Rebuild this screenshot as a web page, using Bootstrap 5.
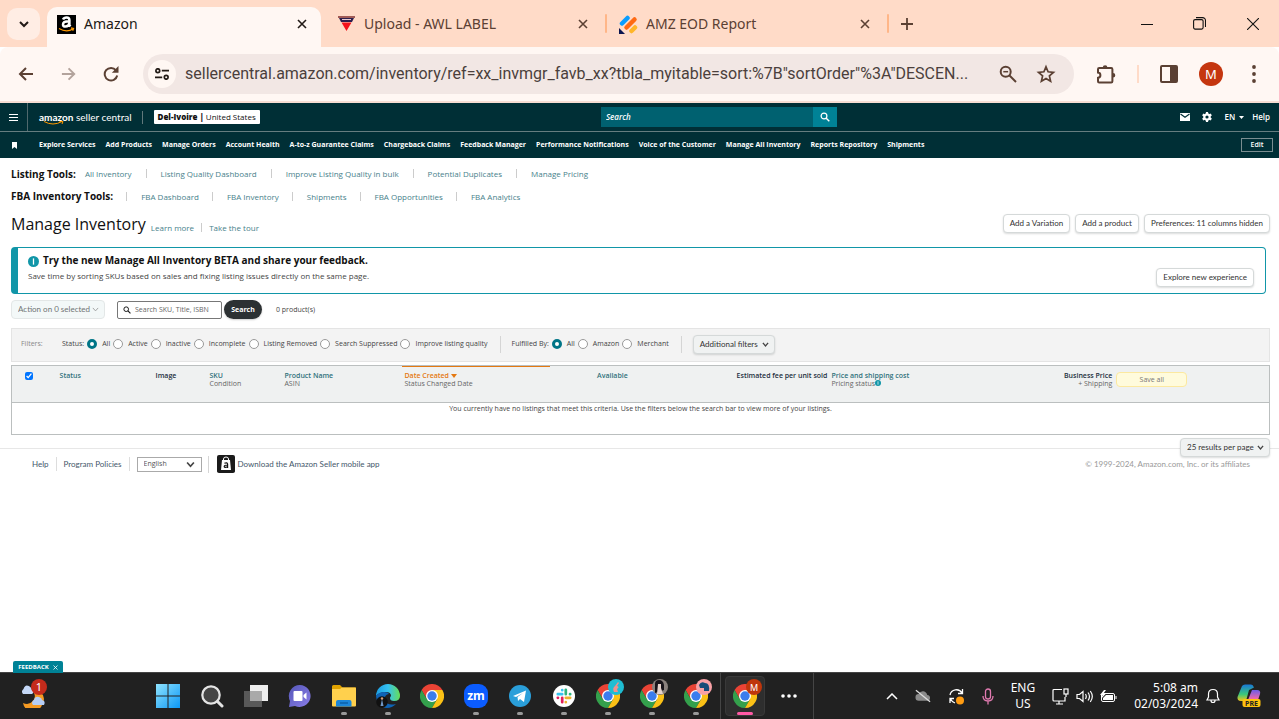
<!DOCTYPE html>
<html lang="en">
<head>
<meta charset="utf-8">
<meta name="viewport" content="width=device-width, initial-scale=1">
<title>Amazon</title>
<link href="https://cdn.jsdelivr.net/npm/bootstrap@5.3.0/dist/css/bootstrap.min.css" rel="stylesheet">
<style>
:root{--ember:"Open Sans","Noto Sans",sans-serif;--label:Lato,"Open Sans",sans-serif;--segoe:"Noto Sans","Open Sans",sans-serif;--teal:#008296;--ink:#002f36}
body{font-family:var(--ember);font-size:7px;line-height:8px;color:#444}
a{color:inherit;text-decoration:none}
button{font-family:inherit}
svg{display:block;flex:none}
.plain{border:0;background:none;padding:0;color:inherit;display:flex;align-items:center;justify-content:center}
/* browser frame */
.tabstrip{background:#ffdbc8;height:47px;font-family:var(--segoe);font-size:14px;line-height:20px;color:#5b4033;padding-left:7px}
.tabmenu{width:33px;height:32px;border-radius:10px;background:#ffede4;margin-top:8px}
.btab{width:280px;height:30px;margin-top:9px;padding:0 17px 0 12px}
.btab.current{width:274px;height:40px;margin:7px 0 0 7px;padding:0 14px 6px 10px;background:#fff7f3;color:#221a16;border-radius:10px 10px 0 0}
.tabsep{width:2px;height:19px;border-radius:1px;background:#ffb688;margin-top:14px}
.winbtn{width:53px;height:47px;color:#111}
.toolbar{background:#fff7f3;height:56px;border-bottom:2px solid #f7ddd3;color:#5b4033;border-radius:8px 8px 0 0}
.omnibox{background:#f2e7e4;border-radius:20px;height:40px;padding:0 18px 0 5px}
.siteinfo{width:28px;height:28px;border-radius:50%;background:#fff7f3}
.omnibox input{font-family:Roboto,"Open Sans",sans-serif;font-size:16px;line-height:24px;color:#4b3f3c;border:0;background:none;padding:0;outline:0;min-width:0;margin:0 6px 0 9px;text-overflow:ellipsis}
.omniicons{gap:19px}
.toolicons{gap:21px;padding:0 23px 0 22px}
.toolsep{width:2px;height:18px;background:#ffdbc8}
.avatar{width:24px;height:24px;border-radius:50%;background:#c5360f;color:#fff;font:13px/24px var(--segoe);text-align:center}
/* seller central header */
.schead{background:var(--ink);color:#fff;font-weight:700;font-size:7px}
.scbar{height:29px;border-bottom:1px solid #657d80}
.scleft{flex:30 1 0}
.scright{flex:23 1 0;font-size:8px;font-weight:600;padding-right:9px}
.burger{width:28px;border-right:1px solid #50696d}
.brand{font-family:var(--label);font-size:10px;line-height:14px;font-weight:400;margin-left:3px}
.brand svg{left:5px;top:11px}
.brandline{width:1px;height:13px;background:#61787b;margin:0 11px 0 10px}
.store{background:#fff;color:#111;height:14px;padding:0 4px;line-height:14px;font-size:8px;border-radius:1px}
.scsearch{width:236px;height:20px;background:#006170}
.scsearch input{background:none;border:0;color:#fff;font:italic 600 8px/10px var(--ember);padding:0 5px;outline:0;min-width:0}
.scsearch input::placeholder,.skubox input::placeholder{color:inherit;opacity:1}
.scsearch button{width:24px;background:var(--teal)}
.favs{height:26px;padding:0 6px 0 8px}
.favs>svg{margin-right:19px}
.favlinks{gap:10px}
.editbtn{border:1px solid #7a8d90;width:32px;height:14px;font-size:7px;font-weight:600;color:#fff}
/* page body */
.content{margin:4px 1px 0 3px}
.toolrow{height:23px;color:#48818b;font-size:8px}
.toolrow h2{font-size:10px;line-height:14px;font-weight:700;color:#111;margin:0}
.toolrow a{padding:0 14px;line-height:9px}
.toolrow a+a{border-left:1px solid #ccc}
.listing a:first-of-type{padding-left:9px}
.fba h2{border-right:1px solid #ccc;line-height:9px;padding-right:13px}
.fba a{padding:0 13px 0 14px}
.titlerow{height:31px;gap:5px}
.learn.toolrow{height:16px}
.learn a:first-child{padding:0 7px 0 0}
.learn a:last-child{padding:0 7px}
.headline{font-size:16px;line-height:22px;font-weight:400;color:#111}
.abtn{font-size:8px;line-height:9px;color:#333;background:#fff;border:1px solid #d5d9d9;border-radius:4px;height:19px;padding:0 6px;box-shadow:0 1px 2px rgba(15,17,17,.15);font-family:var(--label)}
.betabox{border:1px solid #1196a8;border-left-width:7px;border-radius:4px;height:47px;margin:8px 4px 0 0;padding:4px 11px 6px 10px}
.betabox h3{font-size:10px;line-height:14px;font-weight:700;color:#111}
.betabox p{font-size:8px;line-height:10px;margin:4px 0 0}
.chev{appearance:none;background-repeat:no-repeat;background-position:right 5px center;background-size:7px 7px;background-image:url("data:image/svg+xml,%3Csvg xmlns='http://www.w3.org/2000/svg' viewBox='0 0 8 8'%3E%3Cpath d='M1 2.2 4 5.6 7 2.2' fill='none' stroke='%23444' stroke-width='1.5'/%3E%3C/svg%3E")}
.actions{height:31px}
.actionsel{width:94px;color:#6f7373;opacity:.8;background-color:#f3f8f8;border-color:#e3e7e7;box-shadow:none;background-image:url("data:image/svg+xml,%3Csvg xmlns='http://www.w3.org/2000/svg' viewBox='0 0 8 8'%3E%3Cpath d='M1 2.2 4 5.6 7 2.2' fill='none' stroke='%23999' stroke-width='1'/%3E%3C/svg%3E")}
.skubox{width:105px;height:18px;margin:0 2px 0 12px;border:1px solid #777;border-radius:2px;padding-left:5px;color:#555}
.skubox input{border:0;padding:0;font:7px/10px var(--ember);color:#666;min-width:0;outline:0}
.darkbtn{background:#2c3133;color:#fff;border-radius:10px;width:38px;height:19px;font-weight:700;font-size:7px;box-shadow:0 1px 2px rgba(0,0,0,.2)}
.count{margin-left:14px}
.filters{background:#f3f3f3;border:1px solid #e4e4e4;height:34px;margin-top:3px;padding:0 0 2px 9px}
.filters .form-check-input{width:10px;height:10px;margin:0 5px 0 3px;border:1px solid #999;background:#fff}
.filters .form-check-input:checked{border:3px solid #007587;background:#fff}
.vline{width:1px;height:17px;background:#d5d5d5}
.flabel{width:41px;color:#888}
.fsep{margin:0 11px 0 12px}
.addf{width:82px;text-align:left;background-color:#f0f2f2}
.inv{table-layout:fixed;border:1px solid #bbbfbf;margin:3px 0 0;width:100%;border-collapse:collapse}
.inv th{background:#eff1f1;height:37px;padding:6px 2px;vertical-align:top;font-weight:400;color:#666;border-bottom:1px solid #bbbfbf}
.inv th b{font-weight:600;display:block;color:#31717c}
.inv th .dk{color:#232f3e}
.inv th.sorted{box-shadow:inset 0 1px #e47911}
.inv th.sorted b{color:#e47911}
.inv td{height:32px;padding:2px;text-align:center;vertical-align:top;color:#444}
.inv input{width:8px;height:8px;margin:0 0 0 11px;display:block;accent-color:#0075ff}
.savebtn{background:#fffbdc;border:1px solid #fce9a0;border-radius:4px;width:71px;height:15px;font-size:7px;color:#777}
.pager{margin-top:3px;position:relative}
.perpage{background-color:#f0f2f2;width:90px;color:#333}
.foot{border-top:1px solid #e7e7e7;padding:6px 29px 0 25px;margin-top:-9px;color:#44576a;font:8px/9px var(--label)}
.foot .item{height:14px;padding:0 7px;border-right:1px solid #ddd}
.foot .copy{color:#999}
.foot .app{margin-left:3px}
.langsel{width:65px;height:15px;margin:0 6px 0 7px;border:1px solid #aaa;background-color:#fff;font:7px/8px var(--ember);color:#555;padding:0 6px;background-size:11px 9px}
.feedback{position:absolute;left:13px;bottom:100%;background:var(--teal);color:#fff;font-size:6px;line-height:12px;font-weight:700;font-family:var(--ember);border-radius:2px 2px 0 0;width:50px;height:12px}
/* desktop bar */
.taskbar{background:#212121;border-top:1px solid #444;height:47px;color:#fff;font-family:var(--segoe)}
.weather{width:66px}
.apps{margin-left:80px}
.task{width:44px;height:46px;position:relative}
.task.run::after{content:"";position:absolute;bottom:4px;left:50%;margin-left:-3px;width:6px;height:3px;border-radius:2px;background:#999}
.task.front{width:40px;height:40px;background:#2e2e2e;border:1px solid #393939;border-radius:4px;margin:0 2px 0 4px}
.task.front::after{background:#ff5aa5;width:16px;margin-left:-8px;bottom:0}
.task .pin{position:absolute;left:22px;top:6px}
.task.front .pin{left:20px;top:2px}
.bar-sep{width:1px;height:46px;background:#454545}
.task+.bar-sep{margin-left:2px}
.tray{gap:17px;padding-right:18px}
.quick{gap:7px}
.clock{font-size:12px;line-height:16px}
.bubble{position:absolute;left:31px;top:6px;width:16px;height:16px;border-radius:50%;background:#c42b1c;font-size:11px;line-height:16px;text-align:center}
</style>
</head>
<body class="d-flex flex-column min-vh-100 bg-white">
<svg width="0" height="0" class="position-absolute" aria-hidden="true">
<defs>
<symbol id="x" viewBox="0 0 10 10"><path d="M1 1l8 8M9 1L1 9" stroke="currentColor" stroke-width="1.6"/></symbol>
<symbol id="mag" viewBox="0 0 10 10"><circle cx="4" cy="4" r="2.9" fill="none" stroke="currentColor" stroke-width="1.2"/><path d="M6.2 6.2 9.3 9.3" stroke="currentColor" stroke-width="1.4"/></symbol>
<symbol id="info" viewBox="0 0 12 12"><circle cx="6" cy="6" r="6" fill="#1196a8"/><path d="M6 2.6v6.8" stroke="#fff" stroke-width="1.4"/></symbol>
<symbol id="chrome" viewBox="0 0 24 24"><path d="M1.6 6A12 12 0 0 1 22.4 6H12L6.8 15z" fill="#ea4335"/><path d="M1.6 6A12 12 0 0 0 12 24l5.2-9H6.8z" fill="#34a04c"/><path d="M12 24A12 12 0 0 0 22.4 6H12l5.2 9z" fill="#fbc116"/><circle cx="12" cy="12" r="6" fill="#fff"/><circle cx="12" cy="12" r="4.7" fill="#3b7ded"/></symbol>
</defs>
</svg>

<div class="tabstrip d-flex">
  <button class="plain tabmenu" aria-label="Search tabs"><svg width="10" height="7" viewBox="0 0 10 7"><path d="M1 1l4 4 4-4" fill="none" stroke="#221a16" stroke-width="2"/></svg></button>
  <div class="btab current d-flex align-items-center">
    <svg width="19" height="19" viewBox="0 0 19 19"><path d="M0 0h19v19H0z"/><path d="M6 4.500Q7 2.400 9.600 2.400 12.400 2.400 12.400 5v5.300l1 1.300M12 6.200Q6 6.200 6 9.400q0 2.100 2.400 2.100 3.600 0 4-3.600" fill="none" stroke="#fff" stroke-width="2.5"/><path d="M2 13.500q7.500 4.500 14 .5M14 13l2.500.4-.8 2.300" fill="none" stroke="#f90" stroke-width="1.3"/></svg>
    <span class="ms-2 me-auto">Amazon</span>
    <button class="plain" aria-label="Close tab"><svg width="10" height="10"><use href="#x"/></svg></button>
  </div>
  <div class="btab d-flex align-items-center ms-1">
    <svg width="19" height="18" viewBox="0 0 19 18"><path d="M1 1h17l-3 6H4z" fill="#2d1f4d"/><path d="M1 2h17" stroke="#a05a55" stroke-width="2"/><path d="M5 4.500h9" stroke="#e7c9cf" stroke-width="1"/><path d="M4.500 7.500h10L9.500 16z" fill="#f5121c"/></svg>
    <span class="ms-2 me-auto">Upload - AWL LABEL</span>
    <button class="plain" aria-label="Close tab"><svg width="10" height="10"><use href="#x"/></svg></button>
  </div>
  <div class="tabsep"></div>
  <div class="btab d-flex align-items-center">
    <svg width="19" height="19" viewBox="0 0 19 19"><path d="M3 8.500 8.500 3" stroke="#0a9dff" stroke-width="4.5" stroke-linecap="round"/><path d="M7.500 12.500 15.500 4.500" stroke="#ff6a13" stroke-width="4.5" stroke-linecap="round"/><path d="M12.500 16 16 12.500" stroke="#ffb629" stroke-width="4.5" stroke-linecap="round"/><path d="M0 13l6 6H0z" fill="#0a1551"/></svg>
    <span class="ms-2 me-auto">AMZ EOD Report</span>
    <button class="plain" aria-label="Close tab"><svg width="10" height="10"><use href="#x"/></svg></button>
  </div>
  <div class="tabsep"></div>
  <button class="plain ms-2 ps-1" aria-label="New tab"><svg width="12" height="12" viewBox="0 0 12 12"><path d="M6 0v12M0 6h12" stroke="#5b4033" stroke-width="1.8"/></svg></button>
  <div class="d-flex ms-auto">
    <button class="plain winbtn" aria-label="Minimize"><svg width="12" height="12" viewBox="0 0 12 12"><path d="M0 6.500h12" stroke="#111"/></svg></button>
    <button class="plain winbtn" aria-label="Restore"><svg width="13" height="13" viewBox="0 0 13 13" fill="none" stroke="#111" stroke-width="1.1"><rect x=".6" y="2.6" width="9.5" height="9.5" rx="1.5"/><path d="M3 .6h6.500a3 3 0 0 1 3 3V10"/></svg></button>
    <button class="plain winbtn" aria-label="Close"><svg width="12" height="12" viewBox="0 0 12 12"><path d="M0 0l12 12M12 0 0 12" stroke="#111" stroke-width="1.1"/></svg></button>
  </div>
</div>

<div class="toolbar d-flex align-items-center">
  <button class="plain ms-3 me-4" aria-label="Back"><svg width="20" height="16" viewBox="0 0 20 16"><path d="M17 8H4M10 2 4 8l6 6" fill="none" stroke="#5b4033" stroke-width="2"/></svg></button>
  <button class="plain me-4" aria-label="Forward"><svg width="19" height="16" viewBox="0 0 20 16"><path d="M2 8h13M9 2l6 6-6 6" fill="none" stroke="#b3a39c" stroke-width="2"/></svg></button>
  <button class="plain me-4" aria-label="Reload"><svg width="16" height="16" viewBox="0 0 16 16"><path d="M13 4.300A6.300 6.300 0 1 0 14.200 9.500" fill="none" stroke="#5b4033" stroke-width="2"/><path d="M15.500 0v6.800H8.800z" fill="#5b4033"/></svg></button>
  <div class="omnibox d-flex align-items-center flex-grow-1">
    <button class="plain siteinfo" aria-label="Site information"><svg width="14" height="12" viewBox="0 0 14 12" fill="none" stroke="#221a16" stroke-width="1.7"><circle cx="2.800" cy="2.700" r="1.9"/><path d="M6.800 2.700H14M0 9.300h7.200"/><circle cx="11.200" cy="9.300" r="1.9"/></svg></button>
    <input class="flex-grow-1" aria-label="Address" value="sellercentral.amazon.com/inventory/ref=xx_invmgr_favb_xx?tbla_myitable=sort:%7B&quot;sortOrder&quot;%3A&quot;DESCEN...">
    <div class="d-flex align-items-center omniicons">
    <button class="plain" aria-label="Zoom"><svg width="18" height="18" viewBox="0 0 18 18" fill="none" stroke="#5b4033" stroke-width="2"><circle cx="6.700" cy="6.700" r="5"/><path d="M10.500 10.500 17 17"/><path d="M4.300 6.700h4.800" stroke-width="1.5"/></svg></button>
    <button class="plain" aria-label="Bookmark"><svg width="20" height="20" viewBox="0 0 20 20"><path d="M10 2.800l2.100 5 5.400.5-4.100 3.600 1.200 5.300L10 14.400l-4.600 2.800 1.200-5.300-4.100-3.600 5.400-.5z" fill="none" stroke="#5b4033" stroke-width="1.7"/></svg></button>
    </div>
  </div>
  <div class="d-flex align-items-center toolicons">
    <button class="plain" aria-label="Extensions"><svg width="20" height="20" viewBox="0 0 20 20"><path d="M2 5.200q0-1.200 1.200-1.200h12q1.200 0 1.200 1.200v12q0 1.200-1.200 1.200h-12q-1.200 0-1.200-1.200v-3.400q2.400-.3 2.400-2.600T2 8.600z" fill="none" stroke="#5b4033" stroke-width="2"/><path d="M6.800 3.500a2.300 2.300 0 0 1 4.600 0zM17 9a2.300 2.300 0 0 1 0 4.600z" fill="#5b4033"/></svg></button>
    <div class="toolsep"></div>
    <button class="plain" aria-label="Side panel"><svg width="18" height="18" viewBox="0 0 18 18"><rect x="1" y="1" width="16" height="16" rx="1" fill="none" stroke="#5b4033" stroke-width="2"/><path d="M10 1h7v16h-7z" fill="#5b4033"/></svg></button>
    <button class="plain avatar" aria-label="Profile">M</button>
    <button class="plain ps-2" aria-label="Menu"><svg width="4" height="18" viewBox="0 0 4 18" fill="#5b4033"><circle cx="2" cy="2" r="1.9"/><circle cx="2" cy="9" r="1.9"/><circle cx="2" cy="16" r="1.9"/></svg></button>
  </div>
</div>

<header class="schead">
  <div class="scbar d-flex">
    <button class="plain burger" aria-label="Menu"><svg width="9" height="7" viewBox="0 0 9 7"><path d="M0 .5h9M0 3.500h9M0 6.500h9" stroke="#fff"/></svg></button>
    <div class="scleft d-flex align-items-center ps-2">
      <a href="#" class="brand position-relative"><b>amazon</b> seller central
        <svg class="position-absolute" width="20" height="5" viewBox="0 0 20 5"><path d="M0 .5q9 5 18 0M15.500.5H19L18 3" fill="none" stroke="#f90" stroke-width="1"/></svg></a>
      <div class="brandline"></div>
      <a href="#" class="store"><b>Del-Ivoire |</b> <span class="fw-normal">United States</span></a>
    </div>
    <form class="scsearch d-flex align-self-center"><input class="flex-grow-1" type="search" aria-label="Search" placeholder="Search"><button class="plain" type="button" aria-label="Search"><svg width="10" height="10"><use href="#mag"/></svg></button></form>
    <div class="scright d-flex align-items-center justify-content-end gap-2">
      <a href="#" aria-label="Messages"><svg width="10" height="8" viewBox="0 0 10 8"><path d="M0 0h10v8H0z" fill="#fff"/><path d="M.5 1 5 4.300 9.500 1" fill="none" stroke="#002f36" stroke-width="1.1"/></svg></a>
      <a href="#" aria-label="Settings" class="mx-1"><svg width="10" height="10" viewBox="0 0 10 10"><circle cx="5" cy="5" r="2.7" fill="none" stroke="#fff" stroke-width="2.2"/><path d="M5 0v2M5 8v2M.7 2.500l1.700 1M7.600 6.500l1.700 1M.7 7.500l1.700-1M7.600 3.500l1.700-1" stroke="#fff" stroke-width="2.2"/></svg></a>
      <button class="plain fw-semibold">EN<svg class="ms-1" width="5" height="3" viewBox="0 0 5 3"><path d="M0 0h5L2.500 3z" fill="#fff"/></svg></button>
      <a href="#">Help</a>
    </div>
  </div>
  <nav class="favs d-flex align-items-center">
    <svg width="12" height="7" viewBox="0 0 12 7"><path d="M4 0h5v7L6.500 5 4 7z" fill="#fff"/></svg>
    <div class="d-flex favlinks me-auto">
      <a href="#">Explore Services</a><a href="#">Add Products</a><a href="#">Manage Orders</a><a href="#">Account Health</a><a href="#">A-to-z Guarantee Claims</a><a href="#">Chargeback Claims</a><a href="#">Feedback Manager</a><a href="#">Performance Notifications</a><a href="#">Voice of the Customer</a><a href="#">Manage All Inventory</a><a href="#">Reports Repository</a><a href="#">Shipments</a>
    </div>
    <button class="plain editbtn">Edit</button>
  </nav>
</header>

<main class="ps-2 pe-2">
 <div class="content">
  <div class="toolrow d-flex align-items-center listing"><h2>Listing Tools:</h2><a href="#">All Inventory</a><a href="#">Listing Quality Dashboard</a><a href="#">Improve Listing Quality in bulk</a><a href="#">Potential Duplicates</a><a href="#">Manage Pricing</a></div>
  <div class="toolrow d-flex align-items-center fba"><h2>FBA Inventory Tools:</h2><a href="#">FBA Dashboard</a><a href="#">FBA Inventory</a><a href="#">Shipments</a><a href="#">FBA Opportunities</a><a href="#">FBA Analytics</a></div>
  <div class="titlerow d-flex align-items-center">
    <h1 class="headline m-0">Manage Inventory</h1>
    <div class="toolrow d-flex align-items-end me-auto learn"><a href="#">Learn more</a><a href="#">Take the tour</a></div>
    <button class="abtn">Add a Variation</button><button class="abtn">Add a product</button><button class="abtn">Preferences: 11 columns hidden</button>
  </div>
  <section class="betabox d-flex justify-content-between">
    <div><div class="d-flex align-items-center"><svg class="mt-1 me-1" width="11" height="11"><use href="#info"/></svg><h3 class="m-0">Try the new Manage All Inventory BETA and share your feedback.</h3></div>
    <p>Save time by sorting SKUs based on sales and fixing listing issues directly on the same page.</p></div>
    <button class="abtn align-self-end">Explore new experience</button>
  </section>
  <div class="actions d-flex align-items-center">
    <select class="abtn chev actionsel" aria-label="Action on selected" disabled><option>Action on 0 selected</option></select>
    <div class="skubox d-flex align-items-center"><svg class="me-1" width="8" height="8" color="#111"><use href="#mag"/></svg><input class="flex-grow-1" type="text" aria-label="Search SKU, Title, ISBN" placeholder="Search SKU, Title, ISBN"></div>
    <button class="plain darkbtn">Search</button>
    <span class="count">0 product(s)</span>
  </div>
  <form class="filters d-flex align-items-center">
    <span class="flabel">Filters:</span><span>Status:</span>
    <input class="form-check-input" type="radio" name="st" id="s1" checked><label for="s1">All</label>
    <input class="form-check-input" type="radio" name="st" id="s2"><label for="s2">Active</label>
    <input class="form-check-input" type="radio" name="st" id="s3"><label for="s3">Inactive</label>
    <input class="form-check-input" type="radio" name="st" id="s4"><label for="s4">Incomplete</label>
    <input class="form-check-input" type="radio" name="st" id="s5"><label for="s5">Listing Removed</label>
    <input class="form-check-input" type="radio" name="st" id="s6"><label for="s6">Search Suppressed</label>
    <input class="form-check-input" type="radio" name="st" id="s7"><label for="s7">Improve listing quality</label>
    <div class="vline fsep"></div>
    <span>Fulfilled By:</span>
    <input class="form-check-input" type="radio" name="fb" id="f1" checked><label for="f1">All</label>
    <input class="form-check-input" type="radio" name="fb" id="f2"><label for="f2">Amazon</label>
    <input class="form-check-input" type="radio" name="fb" id="f3"><label for="f3">Merchant</label>
    <div class="vline fsep"></div>
    <button type="button" class="abtn chev addf">Additional filters</button>
  </form>
  <table class="inv">
    <colgroup><col style="width:3.66%"><col style="width:7.63%"><col style="width:4.29%"><col style="width:5.96%"><col style="width:9.54%"><col style="width:11.76%"><col style="width:9.86%"><col style="width:12.32%"><col style="width:13.59%"><col style="width:9.06%"><col></colgroup>
    <thead><tr>
      <th><input type="checkbox" aria-label="Select all" checked></th>
      <th><b>Status</b></th><th><b class="dk">Image</b></th><th><b>SKU</b>Condition</th><th><b>Product Name</b>ASIN</th>
      <th class="sorted"><b>Date Created <svg class="d-inline-block" width="6" height="4" viewBox="0 0 6 4"><path d="M0 0h6L3 4z" fill="#e47911"/></svg></b>Status Changed Date</th>
      <th class="text-center"><b>Available</b></th><th class="text-end"><b class="dk">Estimated fee per unit sold</b></th>
      <th><b>Price and shipping cost</b><span class="d-flex">Pricing status<svg width="6" height="6"><use href="#info"/></svg></span></th>
      <th class="text-end"><b class="dk">Business Price</b>+ Shipping</th><th><button class="savebtn plain">Save all</button></th>
    </tr></thead>
    <tbody><tr><td colspan="11">You currently have no listings that meet this criteria. Use the filters below the search bar to view more of your listings.</td></tr></tbody>
  </table>
  <div class="d-flex justify-content-end pager"><select class="abtn chev perpage" aria-label="Results per page"><option>25 results per page</option></select></div>
 </div>
</main>
<footer class="foot d-flex align-items-center">
  <a href="#" class="item d-flex align-items-center">Help</a><a href="#" class="item d-flex align-items-center">Program Policies</a>
  <select class="chev langsel" aria-label="Language"><option>English</option></select>
  <div class="vline"></div>
  <svg class="ms-2" width="18" height="18" viewBox="0 0 18 18"><rect width="18" height="18" rx="2" fill="#1b1b1b"/><path d="M5 5h8l1 10H4z" fill="#fff"/><path d="M6.500 6V4q0-2 2.500-2t2.500 2v2" fill="none" stroke="#fff"/><path d="M7.400 8.300q2.800-1.300 3.200.7v4M10.500 10q-3.300 0-3.300 1.500t3.300.4" fill="none" stroke="#111" stroke-width="1.2"/></svg>
  <a href="#" class="me-auto app">Download the Amazon Seller mobile app</a>
  <span class="copy">© 1999-2024, Amazon.com, Inc. or its affiliates</span>
</footer>

<div class="taskbar d-flex align-items-center mt-auto position-relative">
  <button class="plain feedback gap-1">FEEDBACK <svg width="5" height="5"><use href="#x"/></svg></button>
  <button class="plain weather" aria-label="Weather"><svg width="26" height="24" viewBox="0 0 26 24"><path d="M13 7a8 8 0 0 1-10 12 10 10 0 0 0 19 2A9 9 0 0 0 20 8z" fill="#f59a23"/><path d="M3 10a3.500 3.500 0 0 1 .5-5Q5 0 9 2q3 2 3 4 3 2 0 4z" fill="#c5d8f7"/><path d="M13 21a3 3 0 0 1 1-5q1-4 5-3 3 1 3 3 4 1 2 5z" fill="#b5cdf4"/></svg></button>
  <span class="bubble">1</span>
  <div class="d-flex align-items-center apps">
    <button class="plain task" aria-label="Start"><svg width="24" height="24" viewBox="0 0 24 24"><defs><linearGradient id="w" x2="1" y2="1"><stop stop-color="#8fe4ff"/><stop offset="1" stop-color="#0c97f5"/></linearGradient></defs><path d="M0 0h11.500v11.500H0zM12.500 0H24v11.500H12.500zM0 12.500h11.500V24H0zM12.500 12.500H24V24H12.500z" fill="url(#w)"/></svg></button>
    <button class="plain task" aria-label="Search"><svg width="24" height="24" viewBox="0 0 24 24"><circle cx="11" cy="11" r="8.7" fill="#454545" stroke="#e4e4e4" stroke-width="2.2"/><path d="M17.500 17.500 22 22" stroke="#e4e4e4" stroke-width="3" stroke-linecap="round"/></svg></button>
    <button class="plain task" aria-label="Task view"><svg width="24" height="22" viewBox="0 0 24 22"><path d="M6 0h18v16H6z" fill="#eee"/><path d="M0 6h18v16H0z" fill="#595959"/><path d="M6 6h12v10H6z" fill="#a9a9a9"/></svg></button>
    <button class="plain task" aria-label="Chat"><svg width="24" height="24" viewBox="0 0 24 24"><defs><linearGradient id="t" x2="1" y2="1"><stop stop-color="#5557b8"/><stop offset="1" stop-color="#8a7de8"/></linearGradient></defs><path d="M12 1a11 11 0 1 1-5 21L1 23l1-6A11 11 0 0 1 12 1z" fill="url(#t)"/><rect x="5.500" y="7" width="9" height="10" rx="1" fill="#fff"/><path d="M15.500 11l3-2.500v7l-3-2.500z" fill="#fff"/></svg></button>
    <button class="plain task run" aria-label="File Explorer"><svg width="24" height="22" viewBox="0 0 24 22"><path d="M0 1.500Q0 0 1.500 0H8l2.500 2.500H24V8H0z" fill="#e0a200"/><path d="M0 4h8l2-1.500h13q1 0 1 1V20.500q0 1-1 1H1q-1 0-1-1z" fill="#ffd04d"/><path d="M4 21.500V17q0-2 2-2h11.500q2 0 2 2v4.500z" fill="#1b86d9"/><path d="M8 18h8" stroke="#0c61a8" stroke-width="1.5"/></svg></button>
    <button class="plain task run" aria-label="Edge"><svg width="24" height="24" viewBox="0 0 24 24"><defs><linearGradient id="e" x2="1"><stop stop-color="#1b9de2"/><stop offset=".5" stop-color="#35c1f1"/><stop offset="1" stop-color="#66de55"/></linearGradient></defs><path d="M0 12A12 12 0 0 1 24 12q0 5-6 5-4 0-4-3 0-1 1-2 0-4-5-4-7 0-10 4z" fill="url(#e)"/><path d="M0 12Q3 8 8 8q4 0 5 2-5 1-4 6 2 6 11 4-4 4-9 4A12 12 0 0 1 0 12z" fill="#0f63b5"/><circle cx="6" cy="18" r="5.8" fill="#111"/><path d="M6 15l1.500 7h-3z" fill="#7198c6"/><circle cx="6" cy="14.500" r="1.2" fill="#d9a07b"/></svg></button>
    <button class="plain task" aria-label="Chrome"><svg width="24" height="24"><use href="#chrome"/></svg></button>
    <button class="plain task run" aria-label="Zoom"><svg width="24" height="24" viewBox="0 0 24 24"><rect width="24" height="24" rx="9" fill="#0b5cff"/><text x="12" y="16" font-size="12" font-weight="700" text-anchor="middle" fill="#fff">zm</text></svg></button>
    <button class="plain task run" aria-label="Telegram"><svg width="22" height="22" viewBox="0 0 22 22"><circle cx="11" cy="11" r="11" fill="#2a9fda"/><path d="M4 11 17 5.500 15 17l-4-3-2 2-.5-4L14 8l-7 4z" fill="#fff"/></svg></button>
    <button class="plain task run" aria-label="Slack"><svg width="22" height="22" viewBox="0 0 22 22"><circle cx="11" cy="11" r="11" fill="#fff"/><g stroke-width="2.7" stroke-linecap="round"><path d="M9.200 5v.2M4.800 9.200h4.400" stroke="#36c5f0"/><path d="M12.800 4.800v4.400M17 9.200h.2" stroke="#2eb67d"/><path d="M12.800 12.800h4.400M12.800 17v.2" stroke="#ecb22e"/><path d="M9.200 12.800v4.400M4.800 12.800H5" stroke="#e01e5a"/></g></svg></button>
    <button class="plain task run" aria-label="Chrome profile 1"><svg width="24" height="24"><use href="#chrome"/></svg><svg class="pin" width="16" height="16" viewBox="0 0 16 16"><circle cx="8" cy="8" r="8" fill="#1fbdd2"/><path d="M6 13q-2-4 1-6l3-4 1 1-2 3q3 1 0 3l1 3z" fill="#f0908c"/></svg></button>
    <button class="plain task run" aria-label="Chrome profile 2"><svg width="24" height="24"><use href="#chrome"/></svg><svg class="pin" width="16" height="16" viewBox="0 0 16 16"><circle cx="8" cy="8" r="8" fill="#8a817d"/><path d="M3 14V5q0-4 4-4t5 5v5l-3 1z" fill="#171319"/><path d="M6 5h3v4l2 6H5z" fill="#e5d3cd"/></svg></button>
    <button class="plain task run" aria-label="Chrome profile 3"><svg width="24" height="24"><use href="#chrome"/></svg><svg class="pin" width="16" height="16" viewBox="0 0 16 16"><circle cx="8" cy="8" r="8" fill="#f9a1a6"/><path d="M3 6q2-4 6-2 5 0 4 8H8V9H4z" fill="#174b78"/></svg></button>
    <div class="bar-sep"></div>
    <button class="plain task run front" aria-label="Chrome profile M"><svg width="24" height="24"><use href="#chrome"/></svg><svg class="pin" width="16" height="16" viewBox="0 0 16 16"><circle cx="8" cy="8" r="8" fill="#bf360c"/><text x="8" y="11.500" font-size="9" text-anchor="middle" fill="#fff">M</text></svg></button>
    <button class="plain task" aria-label="More"><svg width="16" height="4" viewBox="0 0 16 4" fill="#fff"><circle cx="2" cy="2" r="1.8"/><circle cx="8" cy="2" r="1.8"/><circle cx="14" cy="2" r="1.8"/></svg></button>
    <div class="bar-sep"></div>
  </div>
  <div class="d-flex align-items-center ms-auto tray">
    <button class="plain" aria-label="Hidden icons"><svg width="12" height="7" viewBox="0 0 12 7"><path d="M1 6l5-5 5 5" fill="none" stroke="#fff" stroke-width="1.5"/></svg></button>
    <svg width="16" height="14" viewBox="0 0 17 14"><path d="M4 12a3.500 3.500 0 0 1 0-7q1.500-3.500 5-3 3.500 1 4 4 3 .5 3 3t-3 3z" fill="#8b8b8b"/><path d="M1 1l15 12" stroke="#ddd" stroke-width="1.4"/></svg>
    <svg width="17" height="17" viewBox="0 0 17 17"><path d="M2 7A6.500 6.500 0 0 1 14 5M14.500 1v4.500H10M2 15v-4.500h4M2.500 11Q4 14 7 15" fill="none" stroke="#fff" stroke-width="1.3"/><circle cx="12" cy="12.500" r="4" fill="#ff9c12"/></svg>
    <svg width="12" height="17" viewBox="0 0 12 17" fill="none" stroke="#e07ab0" stroke-width="1.3"><rect x="3.500" y="1" width="5" height="10" rx="2.5"/><path d="M1 8q0 5 5 5t5-5M6 13v3.500"/></svg>
    <div class="clock text-center">ENG<br>US</div>
    <div class="d-flex align-items-center quick">
      <svg width="17" height="17" viewBox="0 0 17 17" fill="none" stroke="#fff" stroke-width="1.2"><path d="M10 1.500H2q-1 0-1 1V12q0 1 1 1h11V9M7 13v3M4 16h7"/><rect x="12" y="1" width="4" height="5"/><path d="M14 6v3"/></svg>
      <svg width="17" height="13" viewBox="0 0 17 13" fill="none" stroke="#fff" stroke-width="1.2"><path d="M1 4.500h2.500L7 1.500v10L3.500 8.500H1zM9.500 4q1.500 2.500 0 5M12 2.500q3 4 0 8M14.300 1q4 5.500 0 11"/></svg>
      <svg width="17" height="13" viewBox="0 0 17 13"><rect x="1.500" y="3.500" width="13" height="8" rx="1.5" fill="none" stroke="#fff"/><path d="M6 5h7v5H3V8zM15.500 6h1v3h-1zM4 0L0 5h2.500L1 9l5-5.500H3.500L6 0z" fill="#fff"/></svg>
    </div>
    <div class="d-flex align-items-center gap-2">
      <div class="clock text-end">5:08 am<br>02/03/2024</div>
      <svg width="14" height="16" viewBox="0 0 14 16" fill="none" stroke="#fff" stroke-width="1.2"><path d="M1 12h12l-1.500-3V6q0-4.500-4.500-4.500T2.500 6v3zM5 12.500q0 2 2 2t2-2"/></svg>
    </div>
    <svg width="24" height="24" viewBox="0 0 24 24"><defs><linearGradient id="c" y2="1" x2="0"><stop stop-color="#1878d8"/><stop offset=".6" stop-color="#3cc77a"/><stop offset="1" stop-color="#f5c518"/></linearGradient><linearGradient id="d" y2="1" x2="0"><stop stop-color="#6c5ce7"/><stop offset="1" stop-color="#ff6aa0"/></linearGradient></defs><path d="M5 2q1-1.500 3-1.500h6q2 0 3 3L12 6 9 17H4q-4 0-3.500-4z" fill="url(#c)"/><path d="M15 6h5q4 0 3 4l-2 6H11z" fill="url(#d)"/><rect x="5.500" y="15" width="18" height="8" rx="2" fill="#ffc20e"/><text x="14.500" y="21.500" font-size="7" font-weight="700" text-anchor="middle" fill="#222">PRE</text></svg>
  </div>
</div>
<script src="https://cdn.jsdelivr.net/npm/bootstrap@5.3.0/dist/js/bootstrap.bundle.min.js"></script>
</body>
</html>
